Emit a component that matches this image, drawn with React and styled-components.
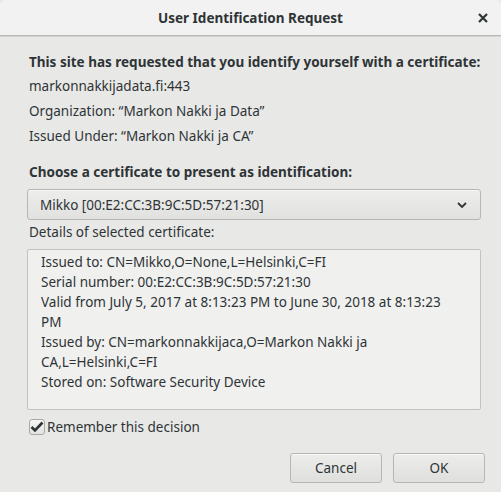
import React, { useState } from 'react';
import styled, { createGlobalStyle } from 'styled-components';

// Page reset, the dialog fills the whole window
const GlobalStyle = createGlobalStyle`
  html, body {
    margin: 0;
    padding: 0;
    background: #e8e8e7;
  }
  * {
    box-sizing: border-box;
  }
`;

const Dialog = styled.div`
  width: 501px;
  height: 492px;
  display: flex;
  flex-direction: column;
  background: #e8e8e7;
  color: #2e3436;
  font-family: 'Noto Sans', 'Open Sans', sans-serif;
  font-size: 13.5px;
  overflow: hidden;
  border-radius: 5px 5px 0 0;
`;

// Title bar at the top
const TitleBar = styled.div`
  height: 36px;
  display: flex;
  align-items: center;
  justify-content: center;
  position: relative;
  background: #f2f2f2;
  border-bottom: 1px solid #b8b8b4;
  box-shadow: 0 1px 0 #d4d4d2;
  border-radius: 5px 5px 0 0;
`;

const Title = styled.div`
  font-weight: bold;
  font-size: 13.5px;
  color: #2e3436;
`;

const CloseButton = styled.button`
  position: absolute;
  right: 9px;
  top: 9px;
  width: 18px;
  height: 18px;
  padding: 0;
  border: none;
  background: transparent;
  display: flex;
  align-items: center;
  justify-content: center;
`;

const Body = styled.div`
  flex: 1;
  display: flex;
  flex-direction: column;
  padding: 14px 20px 0 27px;
`;

const Heading = styled.div`
  font-weight: bold;
  height: 24px;
  line-height: 24px;
  padding-left: 2px;
  margin-top: ${p => p.$top || 0}px;
`;

const InfoLine = styled.div`
  height: 25px;
  line-height: 25px;
  padding-left: 2px;
`;

const Select = styled.div`
  margin-top: 5px;
  height: 31px;
  display: flex;
  align-items: center;
  justify-content: space-between;
  padding: 0 12px 0 12px;
  border: 1px solid #b6b6b3;
  border-radius: 3px;
  background: linear-gradient(#ededec, #e1e1df);
  box-shadow: inset 0 1px 0 #f7f7f7;
`;

const Label = styled.div`
  height: 29px;
  line-height: 24px;
  padding-left: 2px;
`;

const DetailsBox = styled.div`
  height: 161px;
  padding: 2px 12px 0;
  border: 1px solid #c3c3bf;
  border-radius: 2px;
  background: #f0f0ef;
  line-height: 20px;
`;

const DetailLine = styled.div`
  padding-left: 1px;
`;

const CheckRow = styled.label`
  display: flex;
  align-items: center;
  margin-top: 8px;
  height: 18px;
  padding-left: 2px;
  cursor: default;
`;

const CheckBox = styled.span`
  width: 16px;
  height: 16px;
  border: 1px solid #a8a8a5;
  border-radius: 3px;
  background: linear-gradient(#f6f6f6, #e2e2e0);
  display: flex;
  align-items: center;
  justify-content: center;
  margin-right: 2px;
`;

const ButtonRow = styled.div`
  display: flex;
  justify-content: flex-end;
  gap: 11px;
  margin-top: 17px;
  margin-right: -4px;
`;

const Button = styled.button`
  width: 92px;
  height: 30px;
  border: 1px solid #b6b6b3;
  border-radius: 3px;
  background: linear-gradient(#ededec, #dfdfdd);
  box-shadow: inset 0 1px 0 #f8f8f8;
  font-family: inherit;
  font-size: 13.5px;
  color: #2e3436;
  padding: 0;
`;

const details = [
  'Issued to: CN=Mikko,O=None,L=Helsinki,C=FI',
  'Serial number: 00:E2:CC:3B:9C:5D:57:21:30',
  'Valid from July 5, 2017 at 8:13:23 PM to June 30, 2018 at 8:13:23',
  'PM',
  'Issued by: CN=markonnakkijaca,O=Markon Nakki ja',
  'CA,L=Helsinki,C=FI',
  'Stored on: Software Security Device',
];

const App = () => {
  const [remember, setRemember] = useState(true);

  return (
    <>
      <GlobalStyle />
      <Dialog>
        <TitleBar>
          <Title>User Identification Request</Title>
          <CloseButton>
            <svg width="12" height="12" viewBox="0 0 12 12">
              <path d="M2 2 L10 10 M10 2 L2 10" stroke="#2e3436" strokeWidth="2.2" />
            </svg>
          </CloseButton>
        </TitleBar>

        <Body>
          <Heading>This site has requested that you identify yourself with a certificate:</Heading>
          <InfoLine>markonnakkijadata.fi:443</InfoLine>
          <InfoLine>Organization: “Markon Nakki ja Data”</InfoLine>
          <InfoLine>Issued Under: “Markon Nakki ja CA”</InfoLine>

          <Heading $top={11}>Choose a certificate to present as identification:</Heading>
          <Select>
            <span>Mikko [00:E2:CC:3B:9C:5D:57:21:30]</span>
            <svg width="12" height="8" viewBox="0 0 12 8">
              <path d="M2 2 L6 6 L10 2" stroke="#2e3436" strokeWidth="1.8" fill="none" />
            </svg>
          </Select>

          <Label>Details of selected certificate:</Label>
          <DetailsBox>
            {details.map((d, i) => (
              <DetailLine key={i}>{d}</DetailLine>
            ))}
          </DetailsBox>

          <CheckRow onClick={() => setRemember(!remember)}>
            <CheckBox>
              {remember && (
                <svg width="14" height="12" viewBox="0 0 14 12">
                  <path d="M1.5 6 L5 9.5 L12.5 1.5" stroke="#2e3436" strokeWidth="2.6" fill="none" />
                </svg>
              )}
            </CheckBox>
            Remember this decision
          </CheckRow>

          <ButtonRow>
            <Button>Cancel</Button>
            <Button>OK</Button>
          </ButtonRow>
        </Body>
      </Dialog>
    </>
  );
};

export default App;
